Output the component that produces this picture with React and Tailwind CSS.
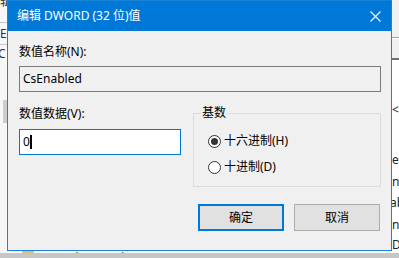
const font = { fontFamily: '"Noto Sans", "Noto Sans CJK SC", sans-serif' };

function Radio({ checked, label }) {
  return (
    <div className="flex items-center h-4">
      <span className="w-[13px] h-[13px] rounded-full border border-[#333333] bg-white flex items-center justify-center">
        {checked && <span className="w-[7px] h-[7px] rounded-full bg-[#333333]" />}
      </span>
      <span className="ml-[3px] text-[12px] leading-4 text-black">{label}</span>
    </div>
  );
}

export default function App() {
  return (
    <div className="relative w-[399px] h-[258px] overflow-hidden bg-white" style={font}>
      {/* background window bits */}
      <div className="absolute left-0 top-0 w-[7px] h-[253px] bg-[#f7f7f7] text-[12px] leading-4 text-[#333]">
        <div className="absolute left-0 top-[-6px]">辑</div>
        <div className="absolute left-0 top-[22px] w-[7px] h-px bg-[#c8c8c8]" />
        <div className="absolute left-0 top-[26px]">E</div>
        <div className="absolute left-0 top-[44px] w-[7px] h-px bg-[#c8c8c8]" />
        <div className="absolute left-[-2px] top-[46px]">C</div>
        <div className="absolute left-[3px] top-[100px] w-[4px] h-[23px] bg-[#cdcdcd]" />
      </div>
      <div className="absolute right-0 top-0 w-[7px] h-[253px] bg-white text-[12px] leading-4 text-[#222]">
        <div className="absolute inset-x-0 top-0 h-[38px] bg-[#f0f0f0] border-b border-[#a0a0a0]" />
        <div className="absolute inset-x-0 top-[39px] h-[21px] bg-[#f0f0f0] border-b-2 border-[#707070]" />
        <div className="absolute left-0 top-[102px]">&lt;0</div>
        <div className="absolute left-0 top-[152px]">e</div>
        <div className="absolute left-0 top-[174px]">n</div>
        <div className="absolute left-[-2px] top-[195px]">ab</div>
        <div className="absolute left-0 top-[217px]">nt</div>
        <div className="absolute left-0 top-[237px]">D</div>
      </div>
      <div className="absolute left-0 top-[251px] w-full h-[2px] overflow-hidden">
        <div className="absolute left-[22px] top-0 w-[12px] h-[2px] bg-[#dcc07a]" />
        <div className="absolute left-[44px] top-[-1px] text-[12px] leading-4 text-[#222]">SecurityDescriptors</div>
      </div>
      <div className="absolute left-0 bottom-0 w-full h-[5px] bg-[#c6c6c6]" />

      {/* dialog */}
      <div className="absolute left-[7px] top-0 w-[385px] h-[251px] border border-[#1883d7] bg-[#f0f0f0] flex flex-col">
        <div className="h-[30px] bg-[#0078d7] flex items-center justify-between pl-[9px] pr-[10px] text-white">
          <span className="text-[12px] leading-4">编辑 DWORD (32 位)值</span>
          <svg width="11" height="11" viewBox="0 0 11 11">
            <path d="M0.5 0.5 L10.5 10.5 M10.5 0.5 L0.5 10.5" stroke="white" strokeWidth="1.1" />
          </svg>
        </div>

        <div className="flex flex-col pl-[11px] pr-[10px] pt-[13px] text-black">
          <div className="text-[12px] leading-4">数值名称(N):</div>
          <div className="mt-[6px] h-[26px] border border-[#7a7a7a] bg-[#f0f0f0] flex items-center px-[3px] text-[12px]">
            CsEnabled
          </div>

          <div className="flex mt-[14px]">
            <div className="w-[162px] flex flex-col">
              <div className="text-[12px] leading-4">数值数据(V):</div>
              <div className="mt-[7px] h-[26px] border border-[#0078d7] bg-white flex items-center px-[3px] text-[12px]">
                <span>0</span>
                <span className="w-[2px] h-[14px] bg-black" />
              </div>
            </div>
            <div className="ml-[12px] flex-1 mt-[7px] h-[74px] border border-[#dcdcdc] relative pl-[14px] pt-[19px] flex flex-col gap-[10px]">
              <span className="absolute left-[7px] top-[-9px] px-px bg-[#f0f0f0] text-[12px] leading-4">基数</span>
              <Radio checked label="十六进制(H)" />
              <Radio label="十进制(D)" />
            </div>
          </div>

          <div className="flex justify-end gap-[10px] mt-[17px] pr-px">
            <button className="w-[86px] h-[27px] border-2 border-[#0078d7] bg-[#e1e1e1] text-[12px] leading-4">确定</button>
            <button className="w-[86px] h-[27px] border border-[#adadad] bg-[#e1e1e1] text-[12px] leading-4">取消</button>
          </div>
        </div>
      </div>
    </div>
  );
}
